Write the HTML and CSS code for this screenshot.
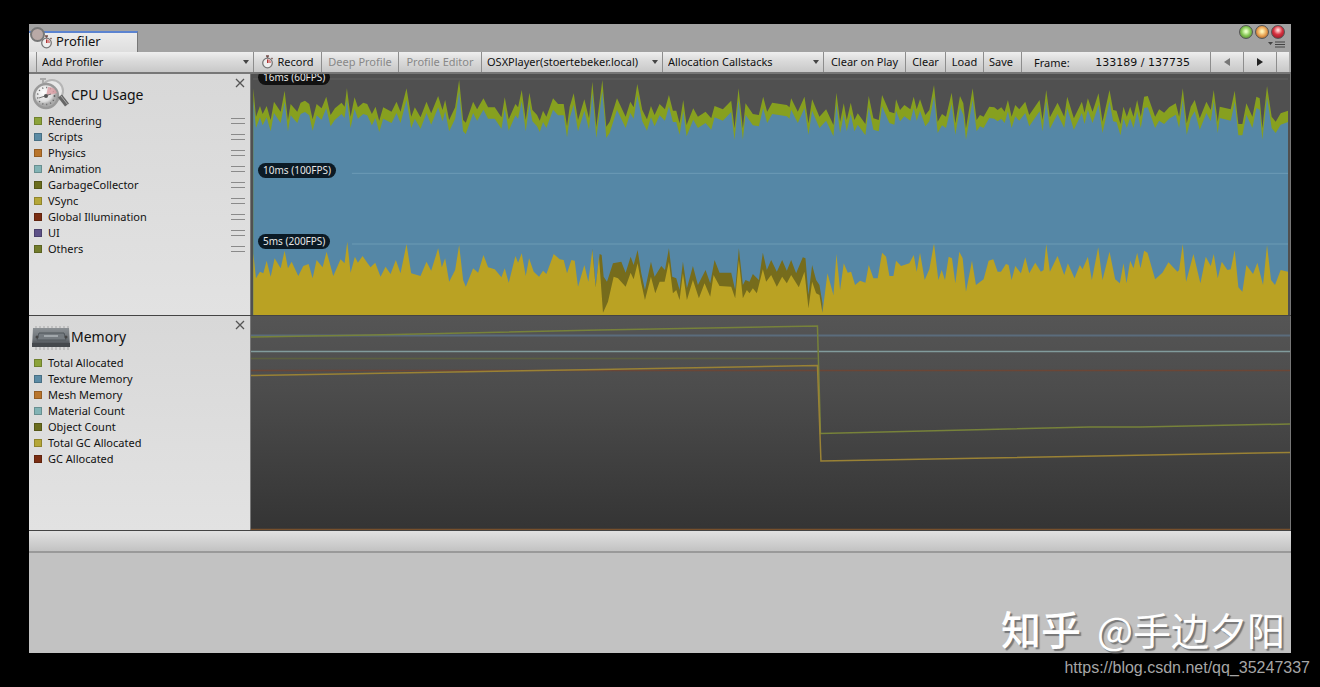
FILE: index.html
```html
<!DOCTYPE html>
<html lang="en">
<head>
<meta charset="utf-8">
<title>Profiler</title>
<link rel="stylesheet" href="styles.css">
</head>
<body>
<svg class="defs" aria-hidden="true">
  <defs>
    <radialGradient id="face" cx="40%" cy="35%"><stop offset="0" stop-color="#fff"/><stop offset=".75" stop-color="#ddd"/><stop offset="1" stop-color="#aaa"/></radialGradient>
    <linearGradient id="chip" x1="0" y1="0" x2="0" y2="1"><stop offset="0" stop-color="#8b9094"/><stop offset=".6" stop-color="#6a6f74"/><stop offset="1" stop-color="#3c4044"/></linearGradient>
    <symbol id="watch" viewBox="0 0 12 14">
      <path d="M4.5 1h3M6 1v2M10 3l1 1" stroke="#75504d" stroke-width="1.4" fill="none"/>
      <circle cx="6" cy="8" r="4.8" fill="#eee" stroke="#777" stroke-width="1.3"/>
      <path d="M6 8V4.2A3.8 3.8 0 0 1 9.6 8z" fill="#d98a8a"/>
      <path d="M6 8V4.5" stroke="#a33" stroke-width="1"/>
    </symbol>
    <symbol id="cross" viewBox="0 0 10 10"><path d="M1 1l8 8M9 1L1 9" stroke="#555" stroke-width="1.3"/></symbol>
  </defs>
</svg>
<main class="window">
  <header class="tabbar">
    <div class="tab"><svg class="tab-icon"><use href="#watch"/></svg><span>Profiler</span></div>
    <span class="knob"></span>
    <div class="window-controls">
      <div class="lights">
        <button class="light green" aria-label="Zoom"></button>
        <button class="light amber" aria-label="Minimize"></button>
        <button class="light red" aria-label="Close"></button>
      </div>
      <button class="menu" aria-label="Window menu"><svg width="17" height="7" viewBox="0 0 17 7"><path d="M0 1h5L2.500 4z" fill="#444"/><path d="M7 1h10M7 3.500h10M7 6h10" stroke="#444"/></svg></button>
    </div>
  </header>

  <div class="toolbar">
    <div class="pick add"><select aria-label="Add Profiler"><option>Add Profiler</option></select></div>
    <button class="tool record"><svg class="rec-icon"><use href="#watch"/></svg>Record</button>
    <button class="tool deep" disabled>Deep Profile</button>
    <button class="tool editor" disabled>Profile Editor</button>
    <div class="pick player"><select aria-label="Connected player"><option>OSXPlayer(stoertebeker.local)</option></select></div>
    <div class="pick alloc"><select aria-label="Allocation Callstacks"><option>Allocation Callstacks</option></select></div>
    <button class="tool play">Clear on Play</button>
    <button class="tool clear">Clear</button>
    <button class="tool load">Load</button>
    <button class="tool save">Save</button>
    <div class="frame"><span>Frame:</span><span class="count">133189 / 137735</span></div>
    <button class="tool step" aria-label="Previous frame" disabled><svg width="6" height="8" viewBox="0 0 6 8"><path d="M6 0v8L0 4z" fill="#777"/></svg></button>
    <button class="tool step" aria-label="Next frame"><svg width="6" height="8" viewBox="0 0 6 8"><path d="M0 0v8l6-4z" fill="#222"/></svg></button>
    <div class="tail"></div>
  </div>

  <section class="module cpu">
    <aside class="side">
      <div class="title">
        <svg class="title-icon" viewBox="0 0 40 36">
          <path d="M9 2h6M12 2v4" stroke="#aaa" stroke-width="2"/>
          <circle cx="21" cy="14" r="11" fill="#e8e8e8" stroke="#b5b5b5" stroke-width="2"/>
          <circle cx="15" cy="19" r="12" fill="url(#face)" stroke="#999" stroke-width="2.500"/>
          <circle cx="15" cy="19" r="8.500" fill="none" stroke="#666" stroke-width="1.500" stroke-dasharray="1 3"/>
          <path d="M15 19l2-9a9 9 0 0 1 9 6z" fill="#dc9ea4" opacity=".8"/>
          <path d="M8 21l12-4" stroke="#777"/><circle cx="15" cy="19" r="2" fill="#555"/>
          <path d="M29 19l7 9" stroke="#666" stroke-width="5"/><path d="M30 19l7 9" stroke="#aaa" stroke-width="1"/>
        </svg>
        <h2>CPU Usage</h2>
        <button class="close" aria-label="Close CPU Usage"><svg><use href="#cross"/></svg></button>
      </div>
      <ul class="legend">
        <li><i class="sw c-green"></i>Rendering<b class="grip"></b></li>
        <li><i class="sw c-blue"></i>Scripts<b class="grip"></b></li>
        <li><i class="sw c-orange"></i>Physics<b class="grip"></b></li>
        <li><i class="sw c-teal"></i>Animation<b class="grip"></b></li>
        <li><i class="sw c-olive"></i>GarbageCollector<b class="grip"></b></li>
        <li><i class="sw c-yellow"></i>VSync<b class="grip"></b></li>
        <li><i class="sw c-rust"></i>Global Illumination<b class="grip"></b></li>
        <li><i class="sw c-violet"></i>UI<b class="grip"></b></li>
        <li><i class="sw c-moss"></i>Others<b class="grip"></b></li>
      </ul>
    </aside>
    <div class="chart">
      <svg class="plot" viewBox="0 0 3108 723" preserveAspectRatio="none">
        <path d="M0 15H3108" stroke="#606060" stroke-width="3"/>
        <polygon id="rendering" fill="#87a01f"/>
        <polygon id="scripts" fill="#5587a6"/>
        <polygon id="gc" fill="#766c1c"/>
        <polygon id="vsync" fill="#baa223"/>
        <path d="M297 298H3108M297 510H3108" stroke="#78a5bd" stroke-width="3" opacity=".7"/>
      </svg>
      <span class="pill p16">16ms (60FPS)</span>
      <span class="pill p10">10ms (100FPS)</span>
      <span class="pill p5">5ms (200FPS)</span>
    </div>
  </section>

  <section class="module memory">
    <aside class="side">
      <div class="title">
        <svg class="title-icon" viewBox="0 0 40 36">
          <path d="M5 7v24M9 7v24M13 7v24M17 7v24M21 7v24M25 7v24M29 7v24M33 7v24M37 7v24" stroke="#c0c0c0" stroke-width="2"/>
          <path d="M2 9h36l1 19H1z" fill="url(#chip)"/>
          <path d="M1 24h38v4H1z" fill="#45494d"/>
          <path d="M8 14h25l2 7H6z" fill="#757b80" stroke="#50565b"/>
          <path d="M13 17h14" stroke="#a1a7ab" stroke-width="2"/>
          <circle cx="6" cy="18" r="1.500" fill="#444"/><circle cx="35" cy="18" r="1.500" fill="#444"/>
        </svg>
        <h2>Memory</h2>
        <button class="close" aria-label="Close Memory"><svg><use href="#cross"/></svg></button>
      </div>
      <ul class="legend">
        <li><i class="sw c-green"></i>Total Allocated</li>
        <li><i class="sw c-blue"></i>Texture Memory</li>
        <li><i class="sw c-orange"></i>Mesh Memory</li>
        <li><i class="sw c-teal"></i>Material Count</li>
        <li><i class="sw c-olive"></i>Object Count</li>
        <li><i class="sw c-yellow"></i>Total GC Allocated</li>
        <li><i class="sw c-rust"></i>GC Allocated</li>
      </ul>
    </aside>
    <div class="chart lines">
      <svg class="plot" viewBox="0 0 1040 214" preserveAspectRatio="none" fill="none" stroke-width="1.500">
        <path d="M0 19.500H1040" stroke="#5b6c7c" stroke-width="2"/>
        <path d="M0 42.500H567" stroke="#5c6040"/>
        <path d="M0 54.500H1040" stroke="#6b4636"/>
        <path d="M0 35.500H1040" stroke="#819b9c"/>
        <path d="M0 21L120 19 349 14 567 10 570 117.500 839 111 890 111 1040 108" stroke="#77823a"/>
        <path d="M0 59.500L349 53.500 567 49.500 570.500 145 1040 136.500" stroke="#9a8235"/>
        <path d="M0 213.500H1040" stroke="#77502c"/>
      </svg>
    </div>
  </section>

  <div class="strip"></div>
  <section class="details"><p class="author"><span class="site">知乎</span><span>@手边夕阳</span></p></section>
</main>
<footer class="source">https://blog.csdn.net/qq_35247337</footer>
<script src="chart.js"></script>
</body>
</html>
```
FILE: styles.css
```css
* { box-sizing: border-box; }
body {
  margin: 0;
  min-height: 100vh;
  padding: 24px 29px 0;
  display: flex;
  flex-direction: column;
  background: #000;
  color: #111;
  font: 11px/16px "Noto Sans", sans-serif;
}
button, select { font: inherit; color: inherit; margin: 0; border: 0; background: none; border-radius: 0; }
.defs { position: absolute; width: 0; height: 0; }
.window { flex: 1; display: flex; flex-direction: column; background: #c2c2c2; }

.tabbar {
  position: relative;
  height: 28px;
  display: flex;
  justify-content: space-between;
  align-items: flex-end;
  background: #a2a2a2;
}
.tab {
  width: 109px;
  height: 21px;
  display: flex;
  align-items: center;
  gap: 3px;
  padding: 0 0 2px 11px;
  border-top: 2px solid #5b83d0;
  border-right: 1px solid #777;
  background: linear-gradient(#ececec, #dedede);
  font-size: 13px;
  line-height: 17px;
}
.tab-icon { width: 13px; height: 14px; }
.knob {
  position: absolute;
  left: 1px;
  top: 3px;
  width: 15px;
  height: 15px;
  border: 2px solid #777;
  border-radius: 50%;
  background: #b9a9a6;
}
.window-controls { align-self: flex-start; display: flex; flex-direction: column; align-items: flex-end; padding: 1px 6px 0 0; gap: 1px; }
.lights { display: flex; gap: 2px; }
.light { width: 14px; height: 14px; padding: 0; border: 1px solid #555; border-radius: 50%; }
.green { background: radial-gradient(circle at 50% 45%, #e5ffc5 10%, #83c552 50%, #426b2a); }
.amber { background: radial-gradient(circle at 50% 45%, #fff2b5 10%, #e8a252 50%, #88451e); }
.red { background: radial-gradient(circle at 50% 35%, #ffd0d0 8%, #d8313f 45%, #7e1420); }
.menu { display: flex; padding: 1px 0 0; }

.toolbar {
  display: flex;
  height: 22px;
  padding-left: 7px;
  background: linear-gradient(#efefef, #dadada 45%, #c8c8c8);
  border-bottom: 2px solid #777;
  line-height: 20px;
}
.tool, .pick, .frame, .tail { border-left: 1px solid #8d8d8d; white-space: nowrap; }
.tool { display: flex; align-items: center; justify-content: center; padding: 0; }
.tool:disabled { color: #888; }
.pick { position: relative; }
.pick select { appearance: none; width: 100%; height: 20px; padding: 0 14px 0 5px; }
.pick::after {
  content: "";
  position: absolute;
  right: 4px;
  top: 8px;
  border: 3px solid transparent;
  border-top: 4px solid #444;
  border-bottom: 0;
}
.add { width: 217px; }
.record { width: 68px; gap: 3px; }
.rec-icon { width: 13px; height: 14px; }
.deep { width: 77px; }
.editor { width: 83px; }
.player { width: 181px; }
.alloc { width: 161px; }
.play { width: 82px; }
.clear { width: 40px; }
.load { width: 38px; }
.save { width: 38px; padding-right: 3px; }
.frame { flex: 1; display: flex; justify-content: space-between; padding: 1px 20px 0 12px; }
.count { font-family: "DejaVu Sans", sans-serif; }
.step { width: 33px; }
.tail { width: 15px; border-right: 2px solid #aaa; }

.module { display: flex; border-bottom: 1px solid #444; }
.cpu { height: 242px; }
.memory { height: 215px; }
.side { width: 222px; flex: none; border-right: 1px solid #777; background: linear-gradient(#d8d8d8, #e2e2e2); }
.title { display: flex; align-items: center; height: 39px; padding: 2px 5px 0 2px; }
.title-icon { width: 40px; height: 36px; flex: none; }
.title h2 { flex: 1; margin: 0; font-size: 14px; line-height: 20px; font-weight: 400; }
.close { align-self: flex-start; display: flex; padding: 2px 0 0; }
.close svg { width: 10px; height: 10px; }
.legend { list-style: none; margin: 0; padding: 0 5px; }
.legend li { display: flex; align-items: center; height: 16px; }
.sw { width: 8px; height: 8px; margin-right: 6px; border: 1px solid rgb(0 0 0 / 20%); }
.c-green { background: #8ca33a; }
.c-blue { background: #5b8ba5; }
.c-orange { background: #b9752c; }
.c-teal { background: #82b3b5; }
.c-olive { background: #6b6d1e; }
.c-yellow { background: #b5a738; }
.c-rust { background: #7a2d12; }
.c-violet { background: #5d5187; }
.c-moss { background: #727c2b; }
.grip { width: 14px; height: 6px; margin-left: auto; border: solid #8a8a8a; border-width: 1px 0; }

.chart { position: relative; flex: 1; min-width: 0; overflow: hidden; padding: 0 2px; background: #505050; border-right: 1px solid #777; }
.lines { padding: 0; background: linear-gradient(#555, #4c4c4c 35%, #343434); }
.plot { display: block; width: 100%; height: 100%; }
.pill {
  position: absolute;
  left: 7px;
  height: 15px;
  padding: 0 5px;
  border-radius: 8px;
  background: #0b1a25;
  color: #e6e6e6;
  font-size: 10px;
  line-height: 15px;
}
.p16 { top: -4px; background: #111; }
.p10 { top: 89px; }
.p5 { top: 160px; }

.strip { height: 22px; background: linear-gradient(#e2e2e2, #c2c2c2); border-bottom: 2px solid #999; }
.details { flex: 1; display: flex; justify-content: flex-end; align-items: flex-end; padding: 0 6px 2px 0; }
.author {
  display: flex;
  align-items: baseline;
  gap: 16px;
  margin: 0;
  color: #fff;
  font: 38px/44px "Noto Sans CJK SC", sans-serif;
  text-shadow: 2px 2px 1px #777;
}
.site { font-size: 40px; font-weight: 500; }
.source {
  height: 34px;
  margin-right: -19px;
  text-align: right;
  color: #a6a6a6;
  font: 16px/30px "Liberation Sans", sans-serif;
}
```
FILE: chart.js
```js
// Samples as "x,y" pairs, three units per pixel, grouped in blocks that share an x origin.
const parse = (dx, dy, text) => text.trim().split(/\s+/).map(p => {
  const [x, y] = p.split(",").map(Number);
  return [x + dx, y + dy];
});

const total = [
  ...parse(-9, -162, `10,205 18,290 30,258 38,282 50,258 62,300 72,245 92,275 104,212 114,300 122,252 142,275 152,248 165,242 178,252 188,298 200,252 215,265 229,230 242,285 255,265 275,248 284,260 291,205 302,290 314,232 324,262 340,248 352,252 366,282 377,260 388,302 400,262 425,275 440,245 452,275 470,205 484,290 495,262 512,292 530,245 544,280 565,228 578,270 586,240 598,300 616,262 628,180 640,300 648,308 670,245 682,268 701,235 715,262 735,262 755,292 765,232 777,298 797,252 805,262 816,210 828,300 839,218 848,270 862,285 870,302 880,272 890,290 910,235 925,252 942,252 952,318 960,260 972,220 985,300 1004,238 1018,295`),
  ...parse(1011, -162, `8,185 20,320 38,180 50,320 60,305 82,235 108,290 122,245 132,262 143,192 158,270 172,298 184,258 195,285 210,252 226,268 238,225 250,272 260,272 270,310 281,240 291,315 311,265 325,290 348,275 365,295 375,258 400,268 425,242 435,325 447,205 460,325 468,250 490,282 508,285 521,230 533,275 548,248 592,255 600,262 605,235 625,275 645,230 657,310 668,238 690,290 710,268 732,315 741,218 752,305 763,250 772,300 784,248 795,300 805,280 828,312 838,228 852,295 868,300 878,225 900,275 915,280 920,238 932,270 945,255 963,268 973,230 982,268 992,238 1008,285 1020,270`),
  ...parse(2031, -162, `14,195 25,305 38,282 50,290 67,218 78,310 92,228 102,250 110,325 130,205 142,300 152,285 163,290 180,260 195,262 205,270 216,262 226,275 236,240 247,290 258,255 270,268 288,245 300,285 331,240 340,300 351,210 362,292 385,248 405,290 414,230 434,295 458,245 466,278 476,235 490,275 508,220 520,305 541,210 552,270 562,272 574,312 583,260 593,290 603,260 613,290 624,240 635,290 645,230 656,228 678,290 690,268 705,278 720,262 740,250 750,290 761,205 773,310 785,260 797,240 812,295 832,245 845,270 854,210 866,305 872,260 905,268 917,212 928,312 940,312 952,250 970,290 982,230 992,235 1000,325 1014,198 1028,290 1040,305 1055,280 1077,272`)
];

const vsyncStart = parse(-9, 468, `10,70 18,145 30,125 40,130 50,92 62,140 74,85 92,115 104,62 114,115 125,95 145,138 160,108 176,102 188,145 200,90 218,112 230,65 250,138 272,88 284,100 292,35 302,128 315,80 324,98 338,78 352,98 362,112 376,98 392,140 407,110 422,132 438,90 452,130 470,42 484,130 512,138 530,95 544,122 565,55 576,112 586,85 598,155 616,120 628,45 640,150 648,170 670,115 685,128 701,75 715,112 735,118 755,142 765,115 777,158 797,78 805,98 816,70 828,138 838,85 852,125 868,140 880,122 890,132 912,72 930,88 942,90 952,130 965,90 975,92 985,170 1004,105 1016,155`);
const vsyncMiddle = parse(1011, 468, `8,60 18,172 28,80 40,248 55,215 72,140 85,145 108,170 123,128 132,148 144,100 155,160 166,210 184,140 197,190 210,155 225,155 238,95 250,190 260,180 270,210 280,130 292,210 310,150 328,205 345,160 362,200 372,135 390,168 425,170 437,205 448,90 460,205 472,180 480,190 490,175 502,190 520,118 530,155 545,135 562,170 578,140 592,160 605,135 628,172 645,125 657,235 668,155 680,190 690,195 699,248`);
const vsyncEnd = [
  ...parse(1011, 468, `714,130 732,195 741,72 752,180 763,100 775,128 785,125 797,165 812,152 828,158 838,105 852,145 865,145 878,68 890,80 900,138 912,138 920,92 935,108 960,100 973,75 982,125 992,68 1006,150 1020,118`),
  ...parse(2031, 468, `14,40 27,150 37,120 47,150 58,80 68,85 78,160 90,65 100,85 110,185 128,92 140,165 163,148 178,92 192,88 205,125 215,125 230,102 238,105 247,150 258,108 275,130 288,82 300,130 318,98 335,125 343,120 351,42 362,125 385,78 405,135 416,100 436,145 452,105 460,118 476,80 488,150 507,52 520,150 541,65 558,148 572,160 583,100 592,160 603,92 613,115 624,68 634,115 645,62 655,68 678,148 700,128 718,97 745,125 750,120 761,42 771,155 793,72 814,160 830,80 845,108 854,72 866,145 878,95 895,120 905,118 917,60 928,172 940,185 952,105 972,132 985,98 1002,165 1014,45 1026,150 1038,165 1055,120 1077,125`)
];
const collector = parse(1011, 468, `8,55 18,170 30,72 36,75 42,140 52,155 70,100 95,95 108,128 123,80 132,105 144,60 155,130 166,180 184,95 195,140 215,108 226,120 238,55 248,140 260,145 270,180 280,95 292,175 310,108 325,165 348,120 362,160 375,90 390,128 425,128 437,180 448,55 460,165 468,150 480,155 490,132 508,150 520,68 532,120 545,90 562,125 578,90 592,122 605,90 620,130 640,82 648,85 657,195 668,105 680,150 690,165 699,220`);

const area = (id, points) => {
  const first = points[0][0], last = points[points.length - 1][0];
  const all = [[first, 723], ...points, [last, 723]];
  document.getElementById(id).setAttribute("points", all.map(p => p.join(",")).join(" "));
};

area("rendering", total);
area("scripts", total.map(([x, y]) => [x, y + 34]));
area("gc", collector);
area("vsync", [...vsyncStart, ...vsyncMiddle, ...vsyncEnd]);
```
